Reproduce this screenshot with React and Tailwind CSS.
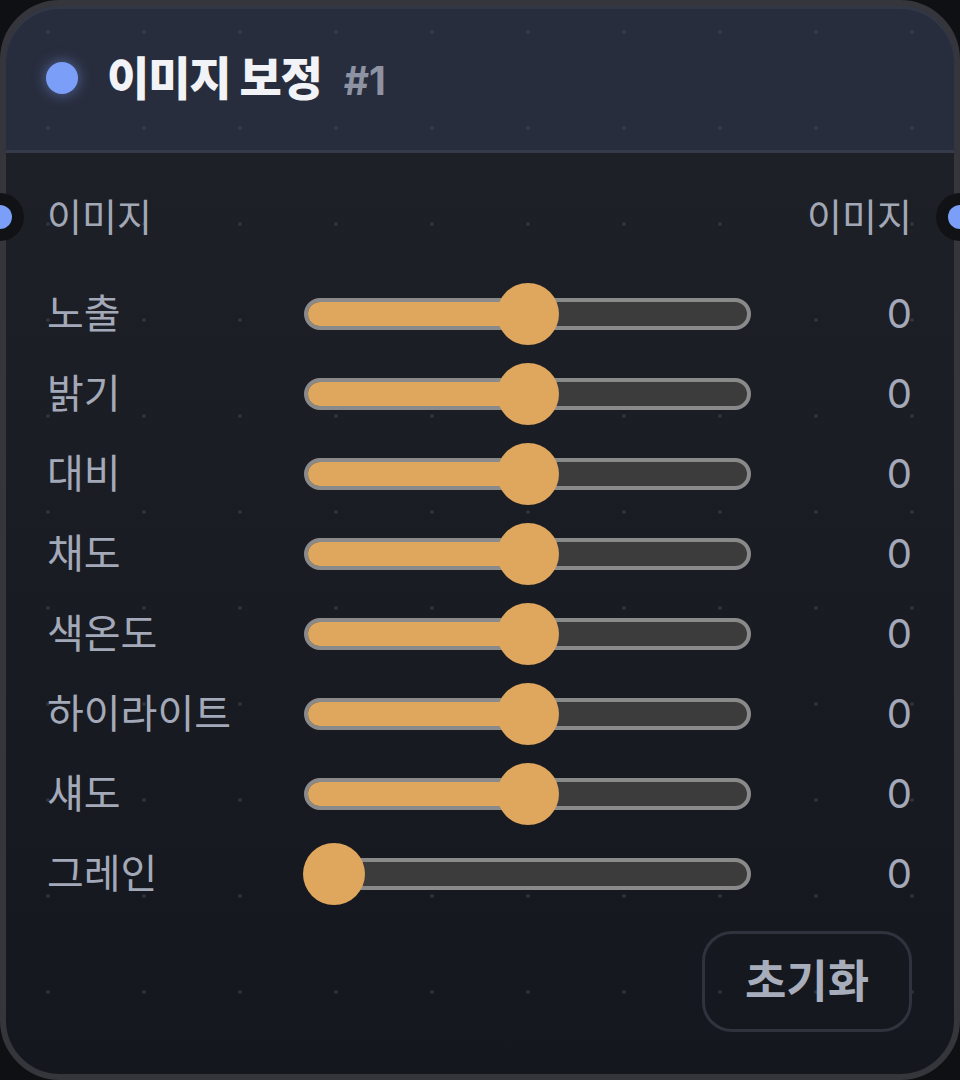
const font = { fontFamily: 'Inter, "Noto Sans CJK KR", sans-serif' };

const rows = [
  { label: '노출', min: -100, max: 100, value: 0 },
  { label: '밝기', min: -100, max: 100, value: 0 },
  { label: '대비', min: -100, max: 100, value: 0 },
  { label: '채도', min: -100, max: 100, value: 0 },
  { label: '색온도', min: -100, max: 100, value: 0 },
  { label: '하이라이트', min: -100, max: 100, value: 0 },
  { label: '섀도', min: -100, max: 100, value: 0 },
  { label: '그레인', min: 0, max: 100, value: 0 },
];

function Slider({ min, max, value }) {
  // thumb center travels from 30px to 417px inside the 447px track
  const pct = (value - min) / (max - min);
  const center = 30 + pct * 387;
  return (
    <div className="relative h-[32px] w-[447px] rounded-full border-[4px] border-[#8a8a8a] bg-[#3c3c3c]">
      <div
        className="absolute inset-y-0 left-0 rounded-full bg-[#dfa65d]"
        style={{ width: center }}
      />
      <div
        className="absolute top-1/2 h-[62px] w-[62px] -translate-y-1/2 rounded-full bg-[#dfa65d]"
        style={{ left: center - 35 }}
      />
    </div>
  );
}

function Port({ side }) {
  return (
    <div
      className={
        'absolute top-1/2 flex h-[48px] w-[48px] -translate-y-1/2 items-center justify-center rounded-full bg-[#111216] ' +
        (side === 'left' ? '-left-[71px]' : '-right-[72px]')
      }
    >
      <div className="h-[24px] w-[24px] rounded-full bg-[#7b9ef8]" />
    </div>
  );
}

export default function App() {
  return (
    <div className="h-[1080px] w-[960px] bg-[#0f1013]" style={font}>
      <div className="relative flex h-full flex-col rounded-[60px] border-[6px] border-[#34363c] bg-[radial-gradient(circle,rgba(70,74,86,0.5)_1.5px,transparent_2px),linear-gradient(to_bottom,#282d3d_0,#282d3d_144px,#1e2027_144px,#15171e_100%)] bg-[length:96px_96px,100%_100%] bg-[position:-6px_-22px,0_0]">
        <div className="flex h-[147px] shrink-0 items-center gap-[29px] rounded-t-[54px] border-b-[3px] border-[#373b49] pl-[40px] shadow-[inset_0_3px_0_rgba(255,255,255,0.05)]">
          <div className="h-[32px] w-[32px] rounded-full bg-[#7b9ef8] shadow-[0_0_14px_rgba(123,158,248,0.55)]" />
          <div className="flex items-baseline gap-[22px]">
            <span className="text-[46px] font-extrabold tracking-tight text-[#f2f3f6]">
              이미지 보정
            </span>
            <span className="text-[39px] font-bold text-[#8d93a3]">#1</span>
          </div>
        </div>

        <div className="flex flex-1 flex-col pt-[32px] pr-[42px] pl-[41px]">
          <div className="relative flex h-[64px] items-center justify-between text-[38px] text-[#a1a7b5]">
            <Port side="left" />
            <span>이미지</span>
            <span>이미지</span>
            <Port side="right" />
          </div>

          <div className="mt-[25px] flex flex-col">
            {rows.map((r) => (
              <div key={r.label} className="flex h-[80px] items-center">
                <span className="w-[257px] shrink-0 text-[40px] text-[#a3a9b8]">
                  {r.label}
                </span>
                <Slider min={r.min} max={r.max} value={r.value} />
                <span className="flex-1 text-right text-[40px] text-[#a3a9b8]">
                  {r.value}
                </span>
              </div>
            ))}
          </div>

          <div className="mt-[17px] flex justify-end">
            <button
              type="button"
              className="h-[101px] w-[210px] rounded-[30px] border-[3px] border-[#30333d] text-[45px] font-bold text-[#a7adba]"
            >
              초기화
            </button>
          </div>
        </div>
      </div>
    </div>
  );
}
